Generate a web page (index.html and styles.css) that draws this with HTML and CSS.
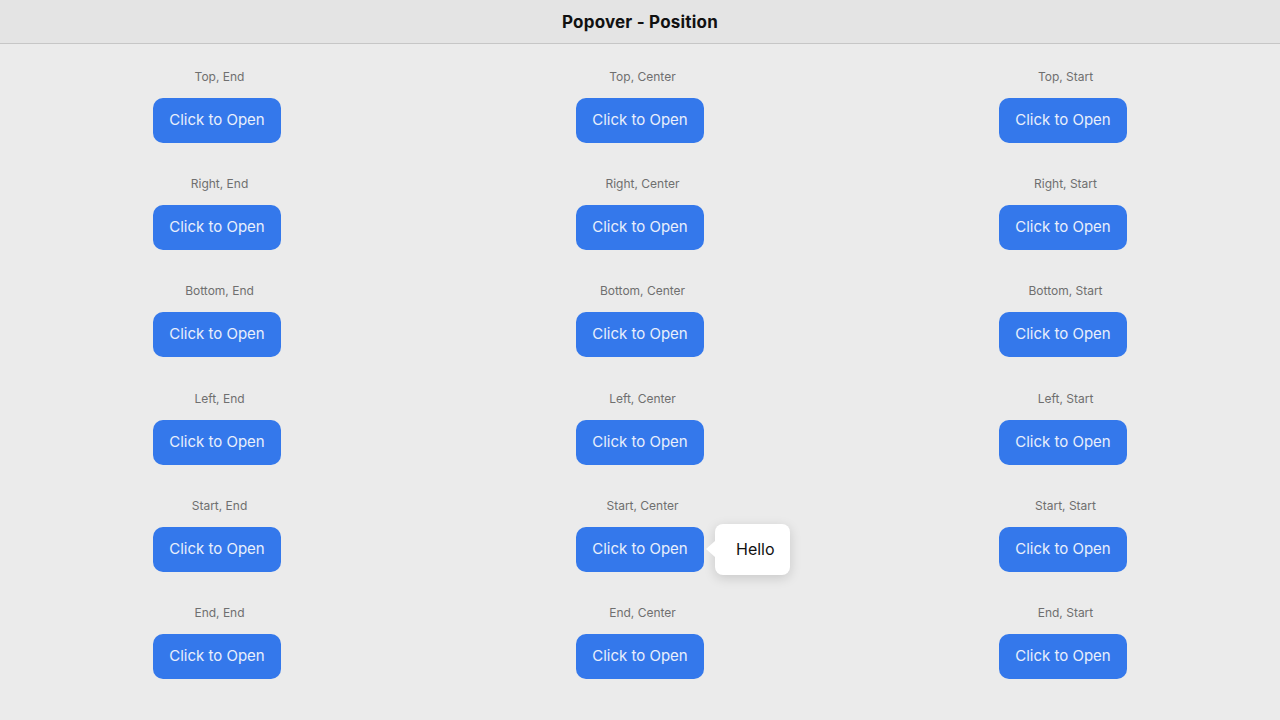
FILE: index.html
```html
<!DOCTYPE html>
<html>
<head>
<meta charset="utf-8">
<link rel="stylesheet" href="styles.css">
</head>
<body>
<header class="bar"><h1 class="title">Popover - Position</h1></header>
<main class="grid">
  <div class="cell"><span class="label">Top, End</span><button class="btn">Click to Open</button></div>
  <div class="cell"><span class="label">Top, Center</span><button class="btn">Click to Open</button></div>
  <div class="cell"><span class="label">Top, Start</span><button class="btn">Click to Open</button></div>
  <div class="cell"><span class="label">Right, End</span><button class="btn">Click to Open</button></div>
  <div class="cell"><span class="label">Right, Center</span><button class="btn">Click to Open</button></div>
  <div class="cell"><span class="label">Right, Start</span><button class="btn">Click to Open</button></div>
  <div class="cell"><span class="label">Bottom, End</span><button class="btn">Click to Open</button></div>
  <div class="cell"><span class="label">Bottom, Center</span><button class="btn">Click to Open</button></div>
  <div class="cell"><span class="label">Bottom, Start</span><button class="btn">Click to Open</button></div>
  <div class="cell"><span class="label">Left, End</span><button class="btn">Click to Open</button></div>
  <div class="cell"><span class="label">Left, Center</span><button class="btn">Click to Open</button></div>
  <div class="cell"><span class="label">Left, Start</span><button class="btn">Click to Open</button></div>
  <div class="cell"><span class="label">Start, End</span><button class="btn">Click to Open</button></div>
  <div class="cell"><span class="label">Start, Center</span>
    <div class="anchor"><button class="btn">Click to Open</button>
      <div class="popover"><span class="arrow"></span>Hello</div>
    </div>
  </div>
  <div class="cell"><span class="label">Start, Start</span><button class="btn">Click to Open</button></div>
  <div class="cell"><span class="label">End, End</span><button class="btn">Click to Open</button></div>
  <div class="cell"><span class="label">End, Center</span><button class="btn">Click to Open</button></div>
  <div class="cell"><span class="label">End, Start</span><button class="btn">Click to Open</button></div>
</main>
</body>
</html>
```
FILE: styles.css
```css
* { box-sizing: border-box; }
html, body { margin: 0; padding: 0; }
body {
  width: 1280px;
  height: 720px;
  overflow: hidden;
  background: #ebebeb;
  font-family: Inter, "Noto Sans", sans-serif;
}
.bar {
  height: 44px;
  background: #e4e4e4;
  border-bottom: 1px solid #c6c6c6;
  display: flex;
  align-items: center;
  justify-content: center;
  padding-top: 1px;
}
.title {
  margin: 0;
  font-size: 17px;
  font-weight: 700;
  color: #111;
  letter-spacing: 0.2px;
}
.grid {
  display: grid;
  grid-template-columns: repeat(3, 414px);
  column-gap: 9px;
  row-gap: 33.2px;
  padding: 25px 10px 0;
}
.cell {
  display: flex;
  flex-direction: column;
  align-items: center;
  gap: 13px;
}
.label {
  font-size: 12px;
  line-height: 16px;
  color: #6f6f6f;
  padding-left: 5px;
}
.anchor { position: relative; }
.btn {
  display: block;
  width: 128px;
  height: 45px;
  border: none;
  border-radius: 10px;
  background: #3478eb;
  color: #e8effc;
  font-family: Inter, "Noto Sans", sans-serif;
  font-size: 15px;
  padding: 0 0 2px;
}
.popover {
  position: absolute;
  left: 139px;
  top: -3px;
  height: 51px;
  padding: 0 15px 0 21px;
  display: flex;
  align-items: center;
  background: #fff;
  border-radius: 8px;
  box-shadow: 0 3px 12px rgba(0,0,0,0.15);
  font-size: 16px;
  color: #111;
}
.arrow {
  position: absolute;
  left: -9px;
  top: 50%;
  margin-top: -8px;
  width: 0;
  height: 0;
  border-top: 8px solid transparent;
  border-bottom: 8px solid transparent;
  border-right: 9px solid #fff;
}
```
